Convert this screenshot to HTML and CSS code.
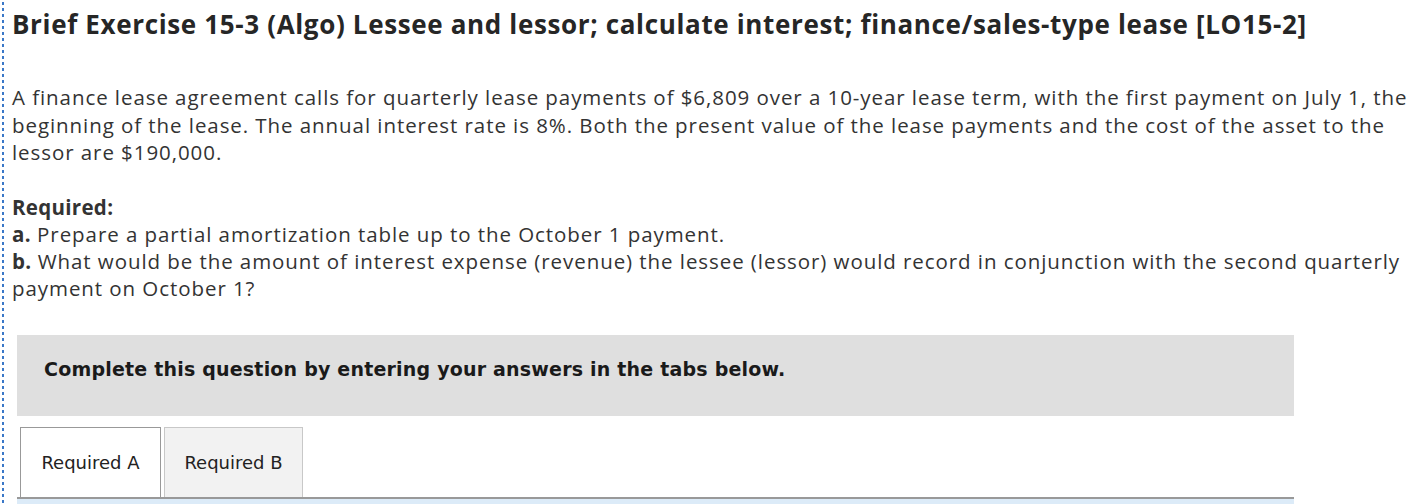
FILE: index.html
```html
<!DOCTYPE html>
<html>
<head>
<meta charset="utf-8">
<link rel="stylesheet" href="styles.css">
</head>
<body>
<div class="question">
  <h1 class="title">Brief Exercise 15-3 (Algo) Lessee and lessor; calculate interest; finance/sales-type lease [LO15-2]</h1>
  <p class="intro">A finance lease agreement calls for quarterly lease payments of $6,809 over a 10-year lease term, with the first payment on July 1, the beginning of the lease. The annual interest rate is 8%. Both the present value of the lease payments and the cost of the asset to the lessor are $190,000.</p>
  <div class="required">
    <div class="req-head">Required:</div>
    <div><b>a.</b> Prepare a partial amortization table up to the October 1 payment.</div>
    <div><b>b.</b> What would be the amount of interest expense (revenue) the lessee (lessor) would record in conjunction with the second quarterly payment on October 1?</div>
  </div>
  <div class="panel">
    <div class="notice">Complete this question by entering your answers in the tabs below.</div>
    <div class="tabs">
      <div class="tab active">Required A</div>
      <div class="tab">Required B</div>
    </div>
    <div class="tab-body"></div>
  </div>
</div>
</body>
</html>
```
FILE: styles.css
```css
html, body { margin: 0; padding: 0; background: #fff; }
body { width: 1426px; height: 504px; overflow: hidden; }
.question {
  margin-left: 2px;
  padding-left: 10px;
  padding-top: 8px;
  background-image: repeating-linear-gradient(to bottom, #3a78c8 0 3px, transparent 3px 6px);
  background-size: 2px 100%;
  background-repeat: no-repeat;
  background-position: 0 2px;
  height: 504px;
  box-sizing: border-box;
  font-family: "Open Sans", "Noto Sans", sans-serif;
  color: #333;
}
.title {
  margin: 0;
  font-size: 26px;
  font-weight: 700;
  line-height: 32px;
  letter-spacing: 0.65px;
  color: #262626;
}
.intro {
  margin: 44px 0 27px;
  font-size: 20.5px;
  line-height: 27.5px;
  letter-spacing: 0.93px;
  width: 1412px;
}
.required { font-size: 20.5px; line-height: 27px; letter-spacing: 0.93px; width: 1412px; }
.req-head { font-weight: 700; letter-spacing: 0.3px; }
.required b { font-weight: 700; letter-spacing: 0.3px; }
.panel { margin-left: 5px; margin-top: 33px; width: 1277px; }
.notice {
  background: #dfdfdf;
  height: 81px;
  box-sizing: border-box;
  padding: 23px 0 0 27px;
  font-family: "DejaVu Sans", Verdana, sans-serif;
  font-weight: 700;
  font-size: 19px;
  letter-spacing: 0.2px;
  color: #1a1a1a;
}
.tabs { display: flex; gap: 3px; margin-top: 11px; padding-left: 3px; }
.tab {
  width: 139px;
  height: 70px;
  box-sizing: border-box;
  border: 1px solid #c8c8c8;
  border-bottom: none;
  background: #f2f2f2;
  font-family: "DejaVu Sans", Verdana, sans-serif;
  font-size: 18px;
  color: #222;
  display: flex;
  align-items: center;
  justify-content: center;
}
.tab.active { background: #fff; border-color: #999; width: 141px; }
.tab-body { border-top: 2px solid #999; background: #dcebf8; height: 10px; }
```
